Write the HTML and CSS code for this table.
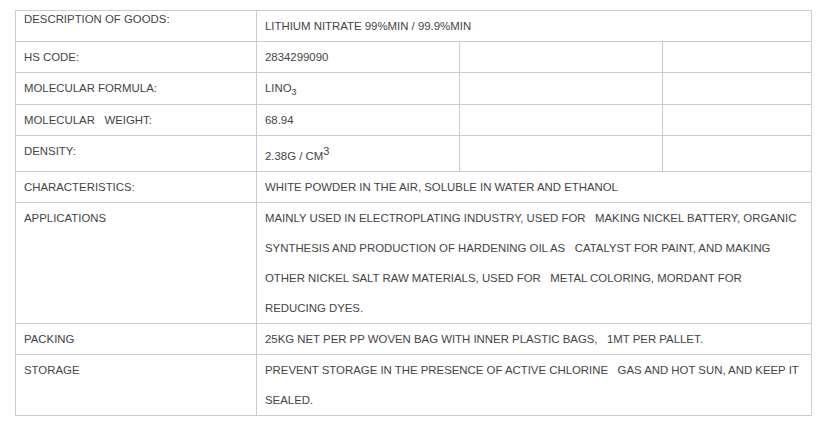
FILE: index.html
```html
<!DOCTYPE html>
<html>
<head>
<meta charset="utf-8">
<link rel="stylesheet" href="styles.css">
</head>
<body>
<table class="spec">
  <colgroup>
    <col class="c1"><col class="c2"><col class="c3"><col class="c4">
  </colgroup>
  <tr>
    <td class="first-label">DESCRIPTION OF GOODS:</td>
    <td colspan="3">LITHIUM NITRATE 99%MIN / 99.9%MIN</td>
  </tr>
  <tr>
    <td>HS CODE:</td>
    <td>2834299090</td><td></td><td></td>
  </tr>
  <tr class="formula">
    <td>MOLECULAR FORMULA:</td>
    <td>LINO<sub>3</sub></td><td></td><td></td>
  </tr>
  <tr>
    <td>MOLECULAR &nbsp; WEIGHT:</td>
    <td>68.94</td><td></td><td></td>
  </tr>
  <tr>
    <td>DENSITY:</td>
    <td>2.38G / CM<sup>3</sup></td><td></td><td></td>
  </tr>
  <tr>
    <td>CHARACTERISTICS:</td>
    <td colspan="3">WHITE POWDER IN THE AIR, SOLUBLE IN WATER AND ETHANOL</td>
  </tr>
  <tr>
    <td>APPLICATIONS</td>
    <td colspan="3">MAINLY USED IN ELECTROPLATING INDUSTRY, USED FOR &nbsp; MAKING NICKEL BATTERY, ORGANIC SYNTHESIS AND PRODUCTION OF HARDENING OIL AS &nbsp; CATALYST FOR PAINT, AND MAKING OTHER NICKEL SALT RAW MATERIALS, USED FOR &nbsp; METAL COLORING, MORDANT FOR REDUCING DYES.</td>
  </tr>
  <tr>
    <td>PACKING</td>
    <td colspan="3">25KG NET PER PP WOVEN BAG WITH INNER PLASTIC BAGS, &nbsp; 1MT PER PALLET.</td>
  </tr>
  <tr>
    <td>STORAGE</td>
    <td colspan="3">PREVENT STORAGE IN THE PRESENCE OF ACTIVE CHLORINE &nbsp; GAS AND HOT SUN, AND KEEP IT SEALED.</td>
  </tr>
</table>
</body>
</html>
```
FILE: styles.css
```css
html, body {
  margin: 0;
  padding: 0;
  background: #fff;
}
body {
  padding: 10px 0 0 15px;
  font-family: "Liberation Sans", Arial, sans-serif;
  font-size: 11.4px;
  color: #444;
}
.spec {
  border-collapse: collapse;
  table-layout: fixed;
  width: 796px;
}
.c1 { width: 241px; }
.c2 { width: 203px; }
.c3 { width: 203px; }
.c4 { width: 149px; }
.spec td {
  border: 1px solid #ccc;
  padding: 0 6px 0 8px;
  line-height: 30px;
  vertical-align: top;
}
.spec td.first-label {
  line-height: normal;
  padding-top: 2px;
}
.spec .formula td {
  padding-bottom: 1px;
}
.spec sub {
  font-size: 9px;
  line-height: 1;
  vertical-align: -3px;
}
.spec sup {
  font-size: 11px;
  line-height: 30px;
  vertical-align: 5px;
}
```
